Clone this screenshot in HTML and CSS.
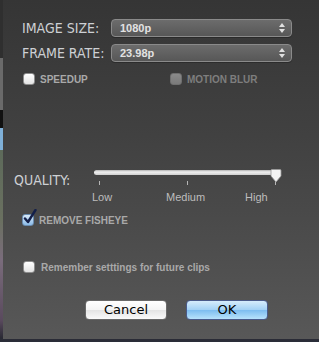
FILE: index.html
```html
<!DOCTYPE html>
<html>
<head>
<meta charset="utf-8">
<link rel="stylesheet" href="styles.css">
</head>
<body>
<div class="screen">
  <div class="panel">
    <div class="field-row">
      <span class="big-label">IMAGE SIZE:</span>
      <div class="select"><span class="select-text">1080p</span><span class="arrows"><span class="up"></span><span class="down"></span></span></div>
    </div>
    <div class="field-row second">
      <span class="big-label">FRAME RATE:</span>
      <div class="select"><span class="select-text">23.98p</span><span class="arrows"><span class="up"></span><span class="down"></span></span></div>
    </div>
    <div class="check-pair">
      <label class="check"><span class="box"></span><span class="small-label">SPEEDUP</span></label>
      <label class="check disabled"><span class="box"></span><span class="small-label">MOTION BLUR</span></label>
    </div>
    <div class="quality">
      <span class="big-label q-label">QUALITY:</span>
      <div class="slider">
        <div class="track"></div>
        <div class="ticks"><span class="tick t-low"></span><span class="tick t-med"></span><span class="tick t-high"></span></div>
        <svg class="knob" width="12" height="14" viewBox="0 0 12 14"><path d="M1 1.5 Q1 0.5 2 0.5 L10 0.5 Q11 0.5 11 1.5 L11 7 L6 13 L1 7 Z" fill="#f4f4f4" stroke="#9a9a9a" stroke-width="0.8"/></svg>
      </div>
    </div>
    <div class="scale"><span class="s-low">Low</span><span class="s-med">Medium</span><span class="s-high">High</span></div>
    <label class="check fisheye"><span class="box checked"><svg class="mark" width="14" height="16" viewBox="0 0 14 16"><path d="M2 9.5 L5 13 L12.5 1" fill="none" stroke="#14204a" stroke-width="2.4" stroke-linecap="round" stroke-linejoin="round"/></svg></span><span class="small-label">REMOVE FISHEYE</span></label>
    <label class="check remember"><span class="box"></span><span class="small-label">Remember setttings for future clips</span></label>
    <div class="buttons">
      <button class="btn">Cancel</button>
      <button class="btn ok">OK</button>
    </div>
  </div>
</div>
</body>
</html>
```
FILE: styles.css
```css
html, body { margin: 0; padding: 0; }
body { width: 319px; height: 342px; overflow: hidden; }
.screen {
  width: 319px; height: 342px;
  background:
    linear-gradient(to bottom, #2f2f2f 0, #2f2f2f 58px, #6a6a6a 58px, #6a6a6a 110px, #111 110px, #111 128px, #7fb0d8 128px, #7fb0d8 150px, #5d6a5a 150px, #6a7060 220px, #7a6c7c 260px, #5a4a5e 320px, #2a2a34 338px, #2a2e3a 342px);
  font-family: "Liberation Sans", Arial, sans-serif;
}
.panel {
  margin-left: 3px;
  width: 316px; height: 339px;
  box-sizing: border-box;
  background: linear-gradient(to bottom, #353535 0%, #414141 40%, #4c4c4c 70%, #585858 100%);
  padding: 19px 27px 0 19px;
  display: flex; flex-direction: column;
}
.field-row { display: flex; align-items: center; height: 18px; }
.field-row.second { margin-top: 7px; }
.big-label {
  font-family: "DejaVu Sans Condensed", "Liberation Sans Narrow", sans-serif;
  font-size: 14px; color: #cdd0d4; letter-spacing: 0;
  width: 89px; flex: none; white-space: nowrap;
}
.select {
  flex: 1; height: 18px; box-sizing: border-box;
  border: 1px solid #8a8a8a; border-radius: 4px;
  background: linear-gradient(to bottom, #6c6c6c, #575757);
  display: flex; align-items: center; justify-content: space-between;
  padding: 0 6px 0 8px;
  box-shadow: 0 1px 0 rgba(0,0,0,0.25);
}
.select-text { font-size: 11px; font-weight: bold; color: #e2e2e2; }
.arrows { display: flex; flex-direction: column; gap: 2px; align-items: center; }
.up { width: 0; height: 0; border-left: 3px solid transparent; border-right: 3px solid transparent; border-bottom: 4px solid #e0e0e0; }
.down { width: 0; height: 0; border-left: 3px solid transparent; border-right: 3px solid transparent; border-top: 4px solid #e0e0e0; }
.check-pair { display: flex; margin-top: 11px; padding-left: 1px; }
.check-pair .check:first-child { width: 147px; }
.check { display: flex; align-items: center; gap: 5px; }
.box {
  width: 12px; height: 12px; box-sizing: border-box; flex: none;
  border: 1px solid #8d8d8d; border-radius: 3px;
  background: linear-gradient(to bottom, #ffffff, #e2e2e2);
  position: relative;
}
.small-label { font-size: 10px; font-weight: bold; color: #a9a9a9; white-space: nowrap; }
.disabled .box { background: linear-gradient(to bottom, #8a8a8a, #7a7a7a); border-color: #6f6f6f; }
.disabled .small-label { color: #7e7e7e; }
.quality { display: flex; align-items: center; margin-top: 83px; margin-left: -8px; height: 20px; }
.q-label { width: 80px; position: relative; top: 2px; }
.slider { position: relative; width: 186px; height: 20px; }
.track {
  position: absolute; left: 0; right: 6px; top: 2px; height: 5px;
  border-radius: 3px;
  background: linear-gradient(to bottom, #b0b0b0, #f0f0f0 40%, #cfcfcf);
}
.tick { position: absolute; top: 13px; width: 1px; height: 4px; background: #b5b5b5; }
.t-low { left: 5px; }
.t-med { left: 93px; }
.t-high { left: 181px; }
.knob { position: absolute; left: 176px; top: 1px; }
.scale { position: relative; height: 14px; margin-top: 3px; font-size: 11px; color: #bdbdbd; }
.scale span { position: absolute; top: 0; }
.s-low { left: 70px; }
.s-med { left: 144px; }
.s-high { left: 223px; }
.fisheye { margin-top: 9px; }
.checked { background: linear-gradient(to bottom, #d8e9f8, #8bbbe8); border-color: #6a8cb0; }
.mark { position: absolute; left: 0; top: -6px; }
.remember { margin-top: 35px; padding-left: 1px; gap: 6px; }
.buttons { display: flex; gap: 19px; margin-top: 27px; margin-left: 63px; }
.btn {
  width: 82px; height: 20px; box-sizing: border-box; margin: 0; padding: 0;
  border: 1px solid #6a6a6a; border-radius: 4px;
  font-family: "DejaVu Sans", "Liberation Sans", sans-serif; font-size: 13px; color: #000;
  background: linear-gradient(to bottom, #ffffff 0%, #f4f4f4 50%, #e4e4e4 51%, #fafafa 100%);
  line-height: 18px;
}
.ok {
  border-color: #4a5a8a;
  background: linear-gradient(to bottom, #d6ecfc 0%, #a4d2f6 48%, #7ebdf0 52%, #b8e2fc 100%);
}
```
